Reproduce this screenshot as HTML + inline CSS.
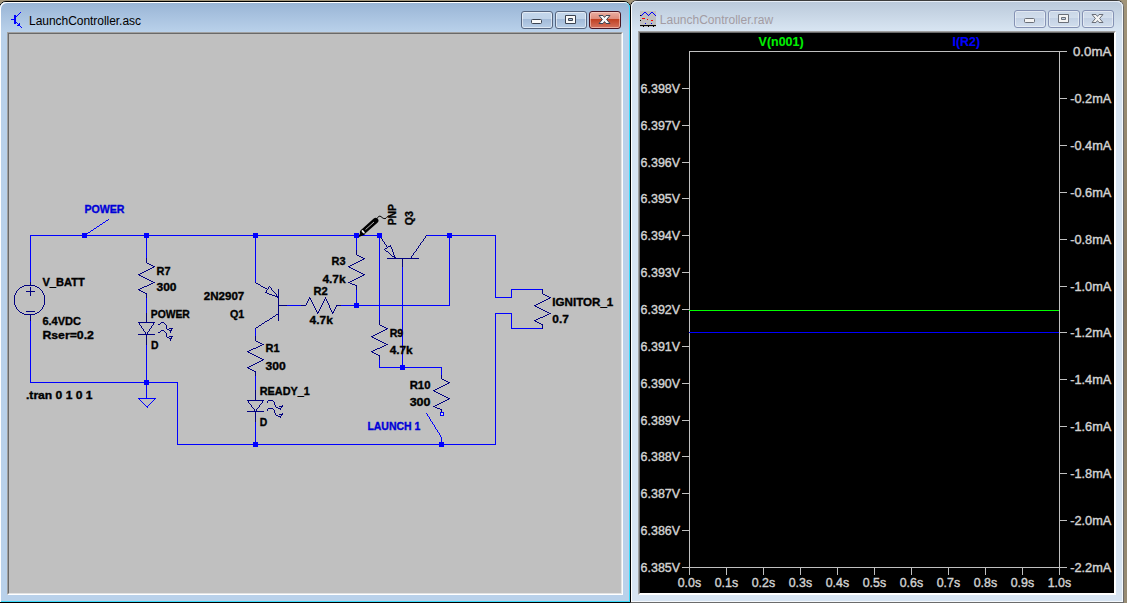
<!DOCTYPE html>
<html><head><meta charset="utf-8"><title>LTspice - LaunchController</title>
<style>
html,body{margin:0;padding:0}
body{width:1127px;height:603px;overflow:hidden;background:linear-gradient(#a2957a,#85765e 50%,#988c74);position:relative;font-family:"Liberation Sans",sans-serif}
.win{position:absolute;box-sizing:border-box}
#w1{left:-1px;top:1px;width:632px;height:602px;border:1px solid #000;border-radius:7px 7px 0 0;background:#b9d1ea;
 box-shadow:inset 1px 1px 0 #fff, inset -1px -1px 0 #3ddcfb}
#w1 .cap{position:absolute;left:0;top:0;right:0;height:30px;background:linear-gradient(#98b4d4,#a6c0de 40%,#b9d1ea);border-radius:6px 6px 0 0;
 box-shadow:inset 1px 1px 0 #fff, inset -1px 0 0 #3ddcfb}
#w2{left:630px;top:0px;width:494px;height:603px;border:1px solid #6b6b6b;border-left-color:#000;border-top-color:#3c3c3c;border-radius:7px 7px 0 0;background:#d7e4f2;
 box-shadow:inset 1px 1px 0 #fff, inset -1px -1px 0 #f4f8fc}
#w2 .cap{position:absolute;left:0;top:0;right:0;height:30px;background:linear-gradient(#bac9da,#c9d7e6 50%,#d8e5f2);border-radius:6px 6px 0 0;
 box-shadow:inset 0 1px 0 #e6edf6, inset 1px 0 0 #fff, inset -1px 0 0 #f4f8fc}
.client{position:absolute;box-sizing:border-box;border:1px solid;border-color:#a0a0a0 #fff #fff #a0a0a0}
.client>div{position:absolute;left:0;top:0;right:0;bottom:0;border:1px solid;border-color:#696969 #e3e3e3 #e3e3e3 #696969}
#c1{left:7px;top:32px;width:616px;height:563px}
#c1>div{background:#c0c0c0}
#c2{left:638px;top:31px;width:478px;height:564px}
#c2>div{background:#000;border-color:#696969 #fff #fff #696969}
.title{position:absolute;font-size:12px;line-height:14px;white-space:nowrap}
.btn{position:absolute;top:11px;width:32px;height:18px;box-sizing:border-box;border:1px solid #56657f;border-radius:3px;
 background:linear-gradient(#c3d6eb 0,#c0d3e9 44%,#a2bad8 45%,#b8cee7 100%);box-shadow:inset 0 0 0 1px rgba(255,255,255,.55)}
.btn.close{border-color:#4a1522;background:linear-gradient(#e9aea2 0,#df8b7a 44%,#c03f20 45%,#d4735f 100%);box-shadow:inset 0 0 0 1px rgba(255,220,210,.55)}
.btn.in{border-color:#8592b4;background:linear-gradient(#c9d6e6 0,#d2deec 44%,#c3d1e4 45%,#d2deed 100%);box-shadow:inset 0 0 0 1px rgba(255,255,255,.45)}
svg{position:absolute;left:0;top:0}
</style></head>
<body>
<div class="win" id="w1"><div class="cap"></div></div>
<div class="win" id="w2"><div class="cap"></div></div>
<div class="client" id="c1"><div></div></div>
<div class="client" id="c2"><div></div></div>
<div class="title" style="left:29px;top:14px;color:#000;letter-spacing:-0.04px">LaunchController.asc</div>
<div class="title" style="left:659.8px;top:12.5px;color:#a39ca3">LaunchController.raw</div>
<div class="btn" style="left:521px"></div><div class="btn" style="left:555px"></div><div class="btn close" style="left:589px"></div>
<div class="btn in" style="left:1014px;top:10px"></div><div class="btn in" style="left:1048px;top:10px"></div><div class="btn in" style="left:1082px;top:10px"></div>
<svg width="1127" height="603" viewBox="0 0 1127 603">
<g shape-rendering="crispEdges">
<rect x="14" y="15" width="2" height="9" fill="#0000ff"/><rect x="11" y="19" width="3" height="1" fill="#0000ff"/><rect x="16" y="16" width="1" height="1" fill="#0000ff"/><rect x="17" y="15" width="1" height="1" fill="#0000ff"/><rect x="18" y="14" width="1" height="1" fill="#0000ff"/><rect x="19" y="13" width="1" height="1" fill="#0000ff"/><rect x="20" y="12" width="1" height="1" fill="#0000ff"/><rect x="16" y="22" width="1" height="1" fill="#0000ff"/><rect x="17" y="23" width="1" height="1" fill="#0000ff"/><rect x="18" y="24" width="1" height="1" fill="#0000ff"/><rect x="19" y="25" width="1" height="1" fill="#0000ff"/><rect x="20" y="26" width="1" height="1" fill="#0000ff"/><rect x="21" y="27" width="1" height="1" fill="#0000ff"/><rect x="19" y="23" width="1" height="3" fill="#0000ff"/><rect x="17" y="25" width="3" height="1" fill="#0000ff"/>
<rect x="640" y="11" width="16" height="16" fill="#c0c0c0"/>
<rect x="644" y="12" width="1" height="1" fill="#0000ff"/><rect x="645" y="12" width="1" height="1" fill="#0000ff"/><rect x="651" y="12" width="1" height="1" fill="#0000ff"/><rect x="652" y="12" width="1" height="1" fill="#0000ff"/><rect x="643" y="13" width="1" height="1" fill="#0000ff"/><rect x="646" y="13" width="1" height="1" fill="#0000ff"/><rect x="650" y="13" width="1" height="1" fill="#0000ff"/><rect x="653" y="13" width="1" height="1" fill="#0000ff"/><rect x="642" y="14" width="1" height="1" fill="#0000ff"/><rect x="647" y="14" width="1" height="1" fill="#0000ff"/><rect x="649" y="14" width="1" height="1" fill="#0000ff"/><rect x="654" y="14" width="1" height="1" fill="#0000ff"/><rect x="641" y="15" width="1" height="1" fill="#0000ff"/><rect x="648" y="15" width="1" height="1" fill="#0000ff"/><rect x="655" y="15" width="1" height="1" fill="#0000ff"/><rect x="645" y="23" width="1" height="1" fill="#0000ff"/><rect x="651" y="23" width="1" height="1" fill="#0000ff"/>
<rect x="642" y="18" width="3" height="1" fill="#ff0000"/><rect x="647" y="19" width="1" height="1" fill="#ff0000"/><rect x="651" y="20" width="2" height="1" fill="#ff0000"/>
<rect x="640" y="15" width="1" height="1" fill="#000"/><rect x="640" y="20" width="1" height="1" fill="#000"/><rect x="640" y="25" width="16" height="1" fill="#000"/><rect x="643" y="26" width="1" height="1" fill="#000"/><rect x="648" y="26" width="1" height="1" fill="#000"/><rect x="653" y="26" width="1" height="1" fill="#000"/>
</g>
<rect x="531.5" y="19.5" width="10" height="4" rx="1" fill="#fafafa" stroke="#3c4452"/><path d="M565.5,15.5 h10 v8 h-10 z M568.5,18.5 v2 h4 v-2 z" fill="#fafafa" stroke="#3c4452" fill-rule="evenodd" stroke-linejoin="round"/><path d="M599.0,15.5 h4 l1.5,1.9 l1.5,-1.9 h4 l-3.4,4 l3.4,4 h-4 l-1.5,-1.9 l-1.5,1.9 h-4 l3.4,-4 z" fill="#fafafa" stroke="#3c4452" stroke-width="1" stroke-linejoin="round"/>
<g transform="translate(0,-1)"><rect x="1024.5" y="19.5" width="10" height="4" rx="1" fill="#f4f4f4" stroke="#6a6f78"/><path d="M1058.5,15.5 h10 v8 h-10 z M1061.5,18.5 v2 h4 v-2 z" fill="#f4f4f4" stroke="#6a6f78" fill-rule="evenodd" stroke-linejoin="round"/><path d="M1092.0,15.5 h4 l1.5,1.9 l1.5,-1.9 h4 l-3.4,4 l3.4,4 h-4 l-1.5,-1.9 l-1.5,1.9 h-4 l3.4,-4 z" fill="#f4f4f4" stroke="#6a6f78" stroke-width="1" stroke-linejoin="round"/></g>
<path shape-rendering="crispEdges" fill="#0000ff" d="M30,236h1v47h-1zM30,320h1v62h-1zM30,382h148v1h-148zM30,235h350v1h-350zM85,234h2v1h-2zM87,233h1v1h-1zM88,232h2v1h-2zM90,231h1v1h-1zM91,230h2v1h-2zM93,229h1v1h-1zM94,228h2v1h-2zM96,227h1v1h-1zM97,226h2v1h-2zM99,225h1v1h-1zM100,224h2v1h-2zM102,223h1v1h-1zM103,222h2v1h-2zM105,221h1v1h-1zM106,220h2v1h-2zM108,219h1v1h-1zM138,398h18v1h-18zM139,399h1v1h-1zM140,400h1v1h-1zM141,401h1v1h-1zM142,402h1v1h-1zM143,403h1v1h-1zM144,404h1v1h-1zM145,405h1v1h-1zM146,236h1v23h-1zM146,297h1v17h-1zM146,344h1v38h-1zM146,383h1v15h-1zM146,406h2v1h-2zM147,407h1v1h-1zM148,405h1v1h-1zM149,404h1v1h-1zM150,403h1v1h-1zM151,402h1v1h-1zM152,401h1v1h-1zM153,400h1v1h-1zM154,399h1v1h-1zM177,383h1v61h-1zM177,444h319v1h-319zM255,236h1v47h-1zM255,328h1v9h-1zM255,375h1v16h-1zM255,421h1v23h-1zM286,305h16v1h-16zM340,305h110v1h-110zM356,236h1v15h-1zM356,289h1v16h-1zM379,236h1v69h-1zM379,306h1v15h-1zM379,359h1v8h-1zM379,367h63v1h-63zM402,266h1v39h-1zM402,306h1v61h-1zM426,413h1v1h-1zM426,235h70v1h-70zM427,414h1v2h-1zM428,416h1v1h-1zM429,417h1v2h-1zM430,419h1v2h-1zM431,421h1v1h-1zM432,422h1v2h-1zM433,424h1v1h-1zM434,425h1v2h-1zM435,427h1v2h-1zM436,429h1v1h-1zM437,430h1v2h-1zM438,432h1v1h-1zM439,433h1v2h-1zM440,435h1v2h-1zM441,368h1v8h-1zM441,437h1v7h-1zM449,236h1v69h-1zM495,236h1v61h-1zM495,314h1v130h-1zM495,297h17v1h-17zM495,313h17v1h-17zM511,290h1v7h-1zM511,314h1v14h-1zM511,289h32v1h-32zM511,328h32v1h-32z"/>
<path shape-rendering="crispEdges" fill="#000080" d="M14,295h1v10h-1zM15,293h1v2h-1zM15,305h1v2h-1zM16,291h1v2h-1zM16,307h1v2h-1zM17,290h1v1h-1zM17,309h1v1h-1zM18,289h1v1h-1zM18,310h1v1h-1zM19,288h1v1h-1zM19,311h1v1h-1zM20,287h2v1h-2zM20,312h2v1h-2zM22,286h2v1h-2zM22,313h2v1h-2zM24,285h11v1h-11zM24,314h11v1h-11zM26,291h9v1h-9zM26,311h9v1h-9zM30,282h1v3h-1zM30,287h1v4h-1zM30,292h1v4h-1zM30,315h1v6h-1zM35,286h2v1h-2zM35,313h2v1h-2zM37,287h2v1h-2zM37,312h2v1h-2zM39,288h1v1h-1zM39,311h1v1h-1zM40,289h1v1h-1zM40,310h1v1h-1zM41,290h1v1h-1zM41,309h1v1h-1zM42,291h1v2h-1zM42,307h1v2h-1zM43,293h1v2h-1zM43,305h1v2h-1zM44,295h1v10h-1zM138,274h2v1h-2zM138,289h2v1h-2zM138,322h17v1h-17zM138,334h17v1h-17zM139,323h1v2h-1zM139,275h2v1h-2zM139,290h2v1h-2zM140,325h1v1h-1zM140,273h2v1h-2zM140,288h2v1h-2zM141,326h1v2h-1zM141,276h2v1h-2zM141,291h2v1h-2zM142,328h1v1h-1zM142,272h2v1h-2zM142,287h2v1h-2zM143,329h1v2h-1zM143,277h2v1h-2zM143,292h2v1h-2zM144,331h1v1h-1zM144,271h2v1h-2zM144,286h3v1h-3zM145,332h1v2h-1zM145,278h2v1h-2zM145,293h2v1h-2zM146,258h1v5h-1zM146,294h1v4h-1zM146,313h1v9h-1zM146,335h1v10h-1zM146,270h2v1h-2zM147,332h1v2h-1zM147,263h2v1h-2zM147,279h2v1h-2zM147,285h2v1h-2zM148,331h1v1h-1zM148,269h2v1h-2zM149,329h1v2h-1zM149,264h2v1h-2zM149,280h2v1h-2zM149,284h2v1h-2zM150,328h1v1h-1zM150,268h2v1h-2zM151,326h1v2h-1zM151,265h2v1h-2zM151,281h2v1h-2zM151,283h2v1h-2zM152,325h1v1h-1zM152,267h2v1h-2zM153,323h1v2h-1zM153,266h2v1h-2zM153,282h2v1h-2zM158,324h2v1h-2zM158,332h2v1h-2zM160,323h1v1h-1zM160,331h1v1h-1zM161,322h3v1h-3zM161,330h3v1h-3zM164,323h1v1h-1zM164,331h1v1h-1zM165,324h1v1h-1zM165,332h1v1h-1zM166,325h1v4h-1zM166,333h1v4h-1zM167,329h2v1h-2zM167,337h2v1h-2zM169,330h3v1h-3zM169,338h3v1h-3zM169,328h4v1h-4zM169,336h4v1h-4zM170,331h1v2h-1zM170,339h1v2h-1zM171,329h1v1h-1zM171,337h1v1h-1zM247,351h2v1h-2zM247,367h2v1h-2zM247,400h17v1h-17zM247,411h17v1h-17zM248,401h1v2h-1zM248,352h2v1h-2zM248,368h2v1h-2zM249,403h1v1h-1zM249,350h2v1h-2zM249,366h2v1h-2zM250,404h1v1h-1zM250,353h2v1h-2zM250,369h2v1h-2zM251,405h1v2h-1zM251,349h2v1h-2zM251,365h2v1h-2zM252,407h1v1h-1zM252,354h2v1h-2zM252,370h2v1h-2zM253,408h1v1h-1zM253,364h2v1h-2zM253,348h3v1h-3zM254,409h1v2h-1zM254,355h2v1h-2zM254,371h2v1h-2zM255,282h1v1h-1zM255,328h1v1h-1zM255,336h1v5h-1zM255,372h1v4h-1zM255,390h1v10h-1zM255,412h1v10h-1zM255,363h2v1h-2zM256,409h1v2h-1zM256,283h2v1h-2zM256,327h2v1h-2zM256,341h2v1h-2zM256,347h2v1h-2zM256,356h2v1h-2zM257,408h1v1h-1zM257,362h2v1h-2zM258,326h1v1h-1zM258,407h1v1h-1zM258,284h2v1h-2zM258,342h2v1h-2zM258,346h2v1h-2zM258,357h2v1h-2zM259,405h1v2h-1zM259,325h2v1h-2zM259,361h2v1h-2zM260,285h1v1h-1zM260,404h1v1h-1zM260,343h2v1h-2zM260,345h2v1h-2zM260,358h2v1h-2zM261,324h1v1h-1zM261,403h1v1h-1zM261,286h2v1h-2zM261,360h2v1h-2zM262,401h1v2h-1zM262,323h2v1h-2zM262,344h2v1h-2zM262,359h2v1h-2zM263,287h2v1h-2zM264,322h1v1h-1zM265,288h2v1h-2zM265,292h2v1h-2zM265,321h2v1h-2zM266,290h1v2h-1zM267,289h1v1h-1zM267,401h1v2h-1zM267,409h1v2h-1zM267,293h2v1h-2zM267,320h2v1h-2zM268,287h1v2h-1zM268,400h5v1h-5zM268,408h5v1h-5zM269,286h1v1h-1zM269,319h1v1h-1zM269,294h3v1h-3zM270,287h1v1h-1zM270,318h2v1h-2zM271,288h1v2h-1zM272,290h1v1h-1zM272,317h1v1h-1zM272,295h3v1h-3zM273,291h1v1h-1zM273,401h1v1h-1zM273,409h1v1h-1zM273,316h2v1h-2zM274,292h1v1h-1zM274,402h1v3h-1zM274,410h1v3h-1zM275,293h1v1h-1zM275,315h1v1h-1zM275,405h1v2h-1zM275,413h1v2h-1zM275,296h4v1h-4zM276,294h1v2h-1zM276,407h2v1h-2zM276,415h2v1h-2zM276,314h3v1h-3zM277,297h2v1h-2zM278,289h1v7h-1zM278,298h1v7h-1zM278,306h1v8h-1zM278,315h1v6h-1zM278,408h3v1h-3zM278,416h3v1h-3zM278,305h9v1h-9zM279,406h4v1h-4zM279,414h4v1h-4zM280,409h1v1h-1zM280,417h1v1h-1zM281,407h1v1h-1zM281,415h1v1h-1zM282,405h1v1h-1zM282,413h1v1h-1zM301,305h5v1h-5zM306,303h1v2h-1zM307,301h1v2h-1zM308,299h1v2h-1zM309,297h1v1h-1zM309,298h2v1h-2zM310,299h1v1h-1zM311,300h1v2h-1zM312,302h1v2h-1zM313,304h1v2h-1zM314,306h1v2h-1zM315,308h1v2h-1zM316,310h1v2h-1zM317,313h1v1h-1zM317,312h2v1h-2zM318,311h1v1h-1zM319,309h1v2h-1zM320,307h1v2h-1zM321,305h1v2h-1zM322,303h1v2h-1zM323,301h1v2h-1zM324,299h1v2h-1zM325,297h1v2h-1zM326,299h1v2h-1zM327,301h1v2h-1zM328,303h1v2h-1zM329,305h1v3h-1zM330,308h1v2h-1zM331,310h1v2h-1zM332,313h1v1h-1zM332,312h2v1h-2zM333,311h1v1h-1zM334,309h1v2h-1zM335,307h1v2h-1zM336,306h1v1h-1zM336,305h5v1h-5zM348,266h2v1h-2zM348,282h2v1h-2zM349,267h2v1h-2zM350,265h2v1h-2zM350,281h2v1h-2zM350,283h2v1h-2zM351,268h2v1h-2zM352,264h2v1h-2zM352,280h2v1h-2zM352,284h3v1h-3zM353,269h2v1h-2zM354,263h2v1h-2zM354,279h2v1h-2zM355,270h2v1h-2zM355,285h2v1h-2zM356,250h1v5h-1zM356,286h1v4h-1zM356,262h2v1h-2zM356,278h2v1h-2zM357,255h2v1h-2zM357,271h2v1h-2zM358,261h2v1h-2zM358,277h2v1h-2zM359,256h2v1h-2zM359,272h2v1h-2zM360,260h2v1h-2zM360,276h2v1h-2zM361,257h2v1h-2zM361,273h2v1h-2zM362,259h2v1h-2zM362,275h2v1h-2zM363,258h2v1h-2zM363,274h2v1h-2zM371,336h2v1h-2zM371,351h2v1h-2zM372,337h2v1h-2zM372,352h2v1h-2zM373,335h2v1h-2zM373,350h2v1h-2zM374,338h2v1h-2zM374,353h2v1h-2zM375,334h2v1h-2zM375,349h2v1h-2zM376,339h2v1h-2zM376,354h2v1h-2zM377,333h2v1h-2zM377,348h3v1h-3zM378,340h2v1h-2zM378,355h2v1h-2zM379,235h1v1h-1zM379,320h1v5h-1zM379,356h1v4h-1zM379,332h2v1h-2zM380,236h1v2h-1zM380,325h2v1h-2zM380,341h2v1h-2zM380,347h2v1h-2zM381,238h1v1h-1zM381,331h2v1h-2zM382,239h1v2h-1zM382,326h2v1h-2zM382,342h2v1h-2zM382,346h2v1h-2zM383,241h1v1h-1zM383,330h2v1h-2zM384,242h1v2h-1zM384,249h1v1h-1zM384,327h2v1h-2zM384,343h2v1h-2zM384,345h2v1h-2zM385,244h1v1h-1zM385,250h1v1h-1zM385,248h2v1h-2zM385,329h2v1h-2zM386,245h1v2h-1zM386,251h2v1h-2zM386,328h2v1h-2zM386,344h2v1h-2zM387,247h1v1h-1zM387,258h32v1h-32zM388,252h1v1h-1zM388,246h3v1h-3zM389,253h1v1h-1zM390,245h1v1h-1zM390,254h1v1h-1zM391,247h1v2h-1zM391,255h1v1h-1zM392,249h1v3h-1zM392,256h3v1h-3zM393,252h1v3h-1zM394,255h1v1h-1zM394,257h2v1h-2zM402,259h1v8h-1zM411,256h1v2h-1zM412,255h1v1h-1zM413,253h1v2h-1zM414,252h1v1h-1zM415,251h1v1h-1zM416,249h1v2h-1zM417,248h1v1h-1zM418,246h1v2h-1zM419,245h1v1h-1zM420,243h1v2h-1zM421,242h1v1h-1zM422,241h1v1h-1zM423,239h1v2h-1zM424,238h1v1h-1zM425,236h1v2h-1zM426,235h1v1h-1zM433,390h2v1h-2zM433,406h2v1h-2zM434,391h2v1h-2zM435,389h2v1h-2zM435,405h2v1h-2zM435,407h2v1h-2zM436,392h2v1h-2zM437,388h2v1h-2zM437,404h2v1h-2zM437,408h3v1h-3zM438,393h2v1h-2zM439,387h2v1h-2zM439,403h2v1h-2zM440,394h2v1h-2zM440,409h2v1h-2zM441,375h1v4h-1zM441,410h1v4h-1zM441,386h2v1h-2zM441,402h2v1h-2zM442,379h2v1h-2zM442,395h2v1h-2zM443,385h2v1h-2zM443,401h2v1h-2zM444,380h2v1h-2zM444,396h2v1h-2zM445,384h2v1h-2zM445,400h2v1h-2zM446,381h2v1h-2zM446,397h2v1h-2zM447,383h2v1h-2zM447,399h2v1h-2zM448,382h2v1h-2zM448,398h2v1h-2zM534,305h2v1h-2zM534,320h2v1h-2zM535,306h2v1h-2zM535,321h2v1h-2zM536,304h2v1h-2zM536,319h2v1h-2zM537,307h2v1h-2zM537,322h2v1h-2zM538,303h2v1h-2zM538,318h2v1h-2zM539,308h2v1h-2zM539,323h2v1h-2zM540,302h2v1h-2zM540,317h3v1h-3zM541,309h2v1h-2zM541,324h2v1h-2zM542,289h1v5h-1zM542,325h1v4h-1zM542,301h2v1h-2zM543,294h2v1h-2zM543,310h2v1h-2zM543,316h2v1h-2zM544,300h2v1h-2zM545,295h2v1h-2zM545,311h2v1h-2zM545,315h2v1h-2zM546,299h2v1h-2zM547,296h2v1h-2zM547,312h2v1h-2zM547,314h2v1h-2zM548,298h2v1h-2zM549,297h2v1h-2zM549,313h2v1h-2z"/>
<rect x="440" y="412" width="4" height="4" fill="#dcdcdc"/>
<path shape-rendering="crispEdges" fill="#0000ff" d="M440,413h1v2h-1zM440,412h4v1h-4zM440,415h4v1h-4zM443,413h1v2h-1z"/>
<g fill="#0000ff" shape-rendering="crispEdges">
<rect x="82" y="233" width="5" height="5"/>
<rect x="144" y="233" width="5" height="5"/>
<rect x="253" y="233" width="5" height="5"/>
<rect x="354" y="233" width="5" height="5"/>
<rect x="377" y="233" width="5" height="5"/>
<rect x="447" y="233" width="5" height="5"/>
<rect x="144" y="380" width="5" height="5"/>
<rect x="253" y="442" width="5" height="5"/>
<rect x="354" y="303" width="5" height="5"/>
<rect x="400" y="365" width="5" height="5"/>
<rect x="439" y="442" width="5" height="5"/>
</g>
<g font-family="Liberation Sans, sans-serif" font-weight="bold" font-size="11" stroke-width="0.35">
<text x="84.5" y="213" fill="#0000d8" stroke="#0000d8" textLength="40" lengthAdjust="spacingAndGlyphs">POWER</text>
<text x="42.4" y="285.5" fill="#000" stroke="#000" textLength="42.3" lengthAdjust="spacingAndGlyphs">V_BATT</text>
<text x="42.4" y="324.5" fill="#000" stroke="#000" textLength="38.6" lengthAdjust="spacingAndGlyphs">6.4VDC</text>
<text x="42.4" y="338.5" fill="#000" stroke="#000" textLength="51.5" lengthAdjust="spacingAndGlyphs">Rser=0.2</text>
<text x="26" y="398.8" fill="#000" stroke="#000" textLength="66.6" lengthAdjust="spacingAndGlyphs">.tran 0 1 0 1</text>
<text x="156.5" y="274.8" fill="#000" stroke="#000" textLength="14" lengthAdjust="spacingAndGlyphs">R7</text>
<text x="156.5" y="291.4" fill="#000" stroke="#000" textLength="20" lengthAdjust="spacingAndGlyphs">300</text>
<text x="150.8" y="317.5" fill="#000" stroke="#000" textLength="39" lengthAdjust="spacingAndGlyphs">POWER</text>
<text x="151" y="348.5" fill="#000" stroke="#000" textLength="7.5" lengthAdjust="spacingAndGlyphs">D</text>
<text x="203.8" y="299.8" fill="#000" stroke="#000" textLength="40.5" lengthAdjust="spacingAndGlyphs">2N2907</text>
<text x="230" y="318" fill="#000" stroke="#000" textLength="14.3" lengthAdjust="spacingAndGlyphs">Q1</text>
<text x="313.6" y="294.7" fill="#000" stroke="#000" textLength="14.2" lengthAdjust="spacingAndGlyphs">R2</text>
<text x="309.6" y="323.5" fill="#000" stroke="#000" textLength="23.2" lengthAdjust="spacingAndGlyphs">4.7k</text>
<text x="331.5" y="264.8" fill="#000" stroke="#000" textLength="14" lengthAdjust="spacingAndGlyphs">R3</text>
<text x="322.4" y="282.5" fill="#000" stroke="#000" textLength="23.2" lengthAdjust="spacingAndGlyphs">4.7k</text>
<text x="265.6" y="351.7" fill="#000" stroke="#000" textLength="14" lengthAdjust="spacingAndGlyphs">R1</text>
<text x="265.6" y="369.5" fill="#000" stroke="#000" textLength="20.2" lengthAdjust="spacingAndGlyphs">300</text>
<text x="259.8" y="394.6" fill="#000" stroke="#000" textLength="50" lengthAdjust="spacingAndGlyphs">READY_1</text>
<text x="259.8" y="426" fill="#000" stroke="#000" textLength="7.5" lengthAdjust="spacingAndGlyphs">D</text>
<text x="389.7" y="336.9" fill="#000" stroke="#000" textLength="13.6" lengthAdjust="spacingAndGlyphs">R9</text>
<text x="389.7" y="353.5" fill="#000" stroke="#000" textLength="23" lengthAdjust="spacingAndGlyphs">4.7k</text>
<text x="409.7" y="388.7" fill="#000" stroke="#000" textLength="20.8" lengthAdjust="spacingAndGlyphs">R10</text>
<text x="409.7" y="406.4" fill="#000" stroke="#000" textLength="20.8" lengthAdjust="spacingAndGlyphs">300</text>
<text x="367.4" y="429.6" fill="#0000d8" stroke="#0000d8" textLength="53" lengthAdjust="spacingAndGlyphs">LAUNCH 1</text>
<text x="552.3" y="306" fill="#000" stroke="#000" textLength="61" lengthAdjust="spacingAndGlyphs">IGNITOR_1</text>
<text x="552.3" y="322.8" fill="#000" stroke="#000" textLength="16.5" lengthAdjust="spacingAndGlyphs">0.7</text>
<text transform="translate(396,225.3) rotate(-90)" fill="#000" stroke="#000" textLength="21.3" lengthAdjust="spacingAndGlyphs">PNP</text>
<text transform="translate(412.7,225.3) rotate(-90)" fill="#000" stroke="#000" textLength="14.2" lengthAdjust="spacingAndGlyphs">Q3</text>
</g>
<g><polygon points="358.3,237.2 361,231.2 365,234.6" fill="#000"/><line x1="362.8" y1="232" x2="375.6" y2="220.6" stroke="#000" stroke-width="5.6" stroke-linecap="round"/><line x1="365.5" y1="229.6" x2="374" y2="222" stroke="#c8c8c8" stroke-width="0.9"/><ellipse cx="363.2" cy="231.8" rx="1" ry="2.1" transform="rotate(-42 363.2 231.8)" fill="#f0f0f0"/><path d="M377,218.6 C378,216.6 379.6,215.4 381,216.6 S383.4,218.8 385,218.6 S387,216.6 388.4,215.6" fill="none" stroke="#000" stroke-width="1"/></g>
<g fill="none" stroke="#c0c0c0" stroke-width="1" shape-rendering="crispEdges">
<rect x="689.5" y="51.5" width="370" height="516"/>
<line x1="682" y1="88.5" x2="689" y2="88.5"/>
<line x1="682" y1="125.5" x2="689" y2="125.5"/>
<line x1="682" y1="162.5" x2="689" y2="162.5"/>
<line x1="682" y1="198.5" x2="689" y2="198.5"/>
<line x1="682" y1="235.5" x2="689" y2="235.5"/>
<line x1="682" y1="272.5" x2="689" y2="272.5"/>
<line x1="682" y1="309.5" x2="689" y2="309.5"/>
<line x1="682" y1="346.5" x2="689" y2="346.5"/>
<line x1="682" y1="383.5" x2="689" y2="383.5"/>
<line x1="682" y1="420.5" x2="689" y2="420.5"/>
<line x1="682" y1="456.5" x2="689" y2="456.5"/>
<line x1="682" y1="493.5" x2="689" y2="493.5"/>
<line x1="682" y1="530.5" x2="689" y2="530.5"/>
<line x1="682" y1="567.5" x2="689" y2="567.5"/>
<line x1="1060" y1="51.5" x2="1067" y2="51.5"/>
<line x1="1060" y1="98.5" x2="1067" y2="98.5"/>
<line x1="1060" y1="145.5" x2="1067" y2="145.5"/>
<line x1="1060" y1="192.5" x2="1067" y2="192.5"/>
<line x1="1060" y1="239.5" x2="1067" y2="239.5"/>
<line x1="1060" y1="286.5" x2="1067" y2="286.5"/>
<line x1="1060" y1="332.5" x2="1067" y2="332.5"/>
<line x1="1060" y1="379.5" x2="1067" y2="379.5"/>
<line x1="1060" y1="426.5" x2="1067" y2="426.5"/>
<line x1="1060" y1="473.5" x2="1067" y2="473.5"/>
<line x1="1060" y1="520.5" x2="1067" y2="520.5"/>
<line x1="1060" y1="567.5" x2="1067" y2="567.5"/>
<line x1="689.5" y1="568" x2="689.5" y2="575"/>
<line x1="726.5" y1="568" x2="726.5" y2="575"/>
<line x1="763.5" y1="568" x2="763.5" y2="575"/>
<line x1="800.5" y1="568" x2="800.5" y2="575"/>
<line x1="837.5" y1="568" x2="837.5" y2="575"/>
<line x1="874.5" y1="568" x2="874.5" y2="575"/>
<line x1="911.5" y1="568" x2="911.5" y2="575"/>
<line x1="948.5" y1="568" x2="948.5" y2="575"/>
<line x1="985.5" y1="568" x2="985.5" y2="575"/>
<line x1="1022.5" y1="568" x2="1022.5" y2="575"/>
<line x1="1059.5" y1="568" x2="1059.5" y2="575"/>
</g>
<line x1="689" y1="310.5" x2="1059" y2="310.5" stroke="#00ff00" shape-rendering="crispEdges"/>
<line x1="689" y1="332.5" x2="1059" y2="332.5" stroke="#0000ff" shape-rendering="crispEdges"/>
<g font-family="Liberation Sans, sans-serif" font-size="12.5" fill="#d2d2d2" stroke="#d2d2d2" stroke-width="0.4">
<text x="640.6" y="92.6" textLength="39.5" lengthAdjust="spacingAndGlyphs">6.398V</text>
<text x="640.6" y="129.6" textLength="39.5" lengthAdjust="spacingAndGlyphs">6.397V</text>
<text x="640.6" y="166.6" textLength="39.5" lengthAdjust="spacingAndGlyphs">6.396V</text>
<text x="640.6" y="202.6" textLength="39.5" lengthAdjust="spacingAndGlyphs">6.395V</text>
<text x="640.6" y="239.6" textLength="39.5" lengthAdjust="spacingAndGlyphs">6.394V</text>
<text x="640.6" y="276.6" textLength="39.5" lengthAdjust="spacingAndGlyphs">6.393V</text>
<text x="640.6" y="313.6" textLength="39.5" lengthAdjust="spacingAndGlyphs">6.392V</text>
<text x="640.6" y="350.6" textLength="39.5" lengthAdjust="spacingAndGlyphs">6.391V</text>
<text x="640.6" y="387.6" textLength="39.5" lengthAdjust="spacingAndGlyphs">6.390V</text>
<text x="640.6" y="424.6" textLength="39.5" lengthAdjust="spacingAndGlyphs">6.389V</text>
<text x="640.6" y="460.6" textLength="39.5" lengthAdjust="spacingAndGlyphs">6.388V</text>
<text x="640.6" y="497.6" textLength="39.5" lengthAdjust="spacingAndGlyphs">6.387V</text>
<text x="640.6" y="534.6" textLength="39.5" lengthAdjust="spacingAndGlyphs">6.386V</text>
<text x="640.6" y="571.6" textLength="39.5" lengthAdjust="spacingAndGlyphs">6.385V</text>
<text x="1073" y="55.6" textLength="38.3" lengthAdjust="spacingAndGlyphs">0.0mA</text>
<text x="1070.2" y="102.6" textLength="41.1" lengthAdjust="spacingAndGlyphs">-0.2mA</text>
<text x="1070.2" y="149.6" textLength="41.1" lengthAdjust="spacingAndGlyphs">-0.4mA</text>
<text x="1070.2" y="196.6" textLength="41.1" lengthAdjust="spacingAndGlyphs">-0.6mA</text>
<text x="1070.2" y="243.6" textLength="41.1" lengthAdjust="spacingAndGlyphs">-0.8mA</text>
<text x="1070.2" y="290.6" textLength="41.1" lengthAdjust="spacingAndGlyphs">-1.0mA</text>
<text x="1070.2" y="336.6" textLength="41.1" lengthAdjust="spacingAndGlyphs">-1.2mA</text>
<text x="1070.2" y="383.6" textLength="41.1" lengthAdjust="spacingAndGlyphs">-1.4mA</text>
<text x="1070.2" y="430.6" textLength="41.1" lengthAdjust="spacingAndGlyphs">-1.6mA</text>
<text x="1070.2" y="477.6" textLength="41.1" lengthAdjust="spacingAndGlyphs">-1.8mA</text>
<text x="1070.2" y="524.6" textLength="41.1" lengthAdjust="spacingAndGlyphs">-2.0mA</text>
<text x="1070.2" y="571.6" textLength="41.1" lengthAdjust="spacingAndGlyphs">-2.2mA</text>
<text x="677.7" y="587.3" textLength="23.4" lengthAdjust="spacingAndGlyphs">0.0s</text>
<text x="714.7" y="587.3" textLength="23.4" lengthAdjust="spacingAndGlyphs">0.1s</text>
<text x="751.7" y="587.3" textLength="23.4" lengthAdjust="spacingAndGlyphs">0.2s</text>
<text x="788.7" y="587.3" textLength="23.4" lengthAdjust="spacingAndGlyphs">0.3s</text>
<text x="825.7" y="587.3" textLength="23.4" lengthAdjust="spacingAndGlyphs">0.4s</text>
<text x="862.7" y="587.3" textLength="23.4" lengthAdjust="spacingAndGlyphs">0.5s</text>
<text x="899.7" y="587.3" textLength="23.4" lengthAdjust="spacingAndGlyphs">0.6s</text>
<text x="936.7" y="587.3" textLength="23.4" lengthAdjust="spacingAndGlyphs">0.7s</text>
<text x="973.7" y="587.3" textLength="23.4" lengthAdjust="spacingAndGlyphs">0.8s</text>
<text x="1010.7" y="587.3" textLength="23.4" lengthAdjust="spacingAndGlyphs">0.9s</text>
<text x="1047.7" y="587.3" textLength="23.4" lengthAdjust="spacingAndGlyphs">1.0s</text>
</g>
<g font-family="Liberation Sans, sans-serif" font-size="13.5" font-weight="bold" stroke-width="0.1">
<text x="758.6" y="45.9" fill="#00f000" stroke="#00f000" textLength="45" lengthAdjust="spacingAndGlyphs">V(n001)</text>
<text x="952.5" y="45.9" fill="#0000ff" stroke="#0000ff" textLength="27.5" lengthAdjust="spacingAndGlyphs">I(R2)</text>
</g>
</svg>
</body></html>
